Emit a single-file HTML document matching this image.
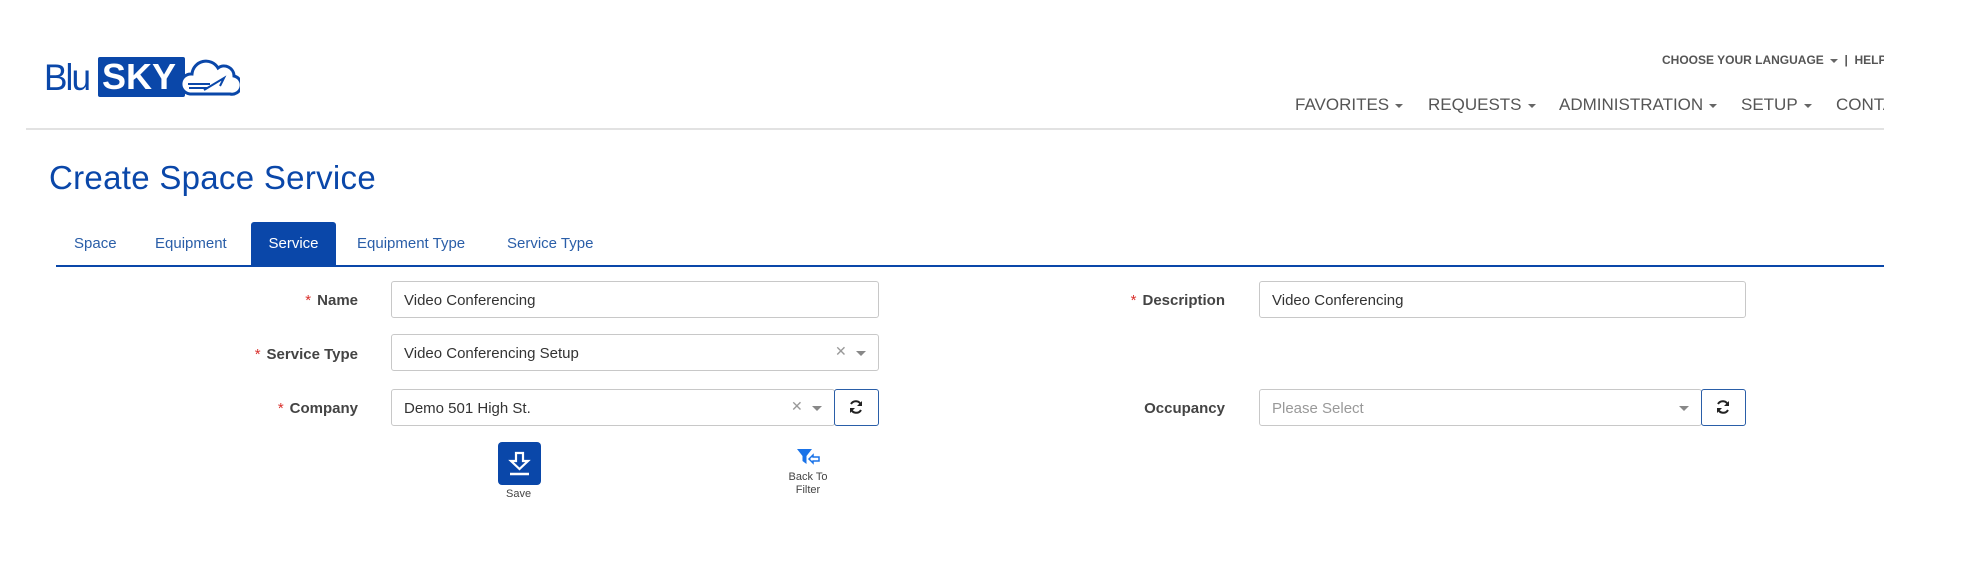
<!DOCTYPE html>
<html><head><meta charset="utf-8"><style>
*{box-sizing:border-box;margin:0;padding:0}
body{width:1964px;height:566px;background:#fff;font-family:"Liberation Sans",Arial,sans-serif;position:relative;overflow:hidden}
.a{position:absolute;white-space:nowrap}
.nav{font-size:17px;color:#555;top:95px}
.caret{display:inline-block;width:0;height:0;border-left:4px solid transparent;border-right:4px solid transparent;border-top:4px solid #666;vertical-align:middle;margin-left:6px}
.tab{font-size:15px;color:#2a5ea8;top:235px}
.lbl{font-size:15px;font-weight:bold;color:#444;text-align:right}
.lbl b{color:#d9302c;font-weight:normal;margin-right:6px}
.inp{border:1px solid #c8c8c8;border-radius:3px;height:37px;font-size:15px;color:#333;padding:10px 12px}
.btn{border:1px solid #2a5ea8;border-radius:3px;width:45px;height:37px;background:#fff}
.x{position:absolute;color:#999;font-size:14px}
.dd{position:absolute;width:0;height:0;border-left:5px solid transparent;border-right:5px solid transparent;border-top:5px solid #888}
</style></head><body>
<!-- logo -->
<div class="a" style="left:44px;top:58px;font-size:37px;color:#0a47a9;letter-spacing:-2px;line-height:40px;transform:scaleX(0.95);transform-origin:left">Blu</div>
<div class="a" style="left:98px;top:57px;width:87px;height:40px;background:#0a47a9;color:#fff;font-size:36px;font-weight:bold;line-height:40px;padding-left:4px;border-radius:2px">SKY</div>
<svg class="a" style="left:180px;top:54px" width="60" height="44" viewBox="0 0 60 44"><path d="M10 40 a10 10 0 0 1 2-20 a14 14 0 0 1 26-6 a10 10 0 0 1 16 8 a9 9 0 0 1-4 18 Z" fill="#fff" stroke="#0a47a9" stroke-width="3"/><path d="M8 30 h22 M9 34 h18 M24 36 l20-12 -4 8" stroke="#0a47a9" stroke-width="2" fill="none"/></svg>
<div class="a" style="left:26px;top:128px;width:1858px;height:2px;background:#e2e2e2"></div>
<div class="a" style="left:1662px;top:53px;font-size:12px;color:#555;font-weight:bold">CHOOSE YOUR LANGUAGE<span class="caret"></span>&nbsp; | &nbsp;HELP</div>
<div class="a" style="left:1884px;top:40px;width:80px;height:100px;background:#fff"></div>
<div class="a nav" style="left:1295px">FAVORITES<span class="caret"></span></div>
<div class="a nav" style="left:1428px">REQUESTS<span class="caret"></span></div>
<div class="a nav" style="left:1559px">ADMINISTRATION<span class="caret"></span></div>
<div class="a nav" style="left:1741px">SETUP<span class="caret"></span></div>
<div class="a nav" style="left:1836px;width:48px;overflow:hidden">CONTACT</div>
<div class="a" style="left:49px;top:159px;font-size:33px;letter-spacing:0.3px;color:#0a47a9">Create Space Service</div>
<div class="a tab" style="left:74px">Space</div>
<div class="a tab" style="left:155px">Equipment</div>
<div class="a" style="left:251px;top:222px;width:85px;height:45px;background:#0a47a9;border-radius:3px 3px 0 0;color:#fff;font-size:15px;text-align:center;line-height:44px">Service</div>
<div class="a tab" style="left:357px">Equipment Type</div>
<div class="a tab" style="left:507px">Service Type</div>
<div class="a" style="left:56px;top:265px;width:1828px;height:2px;background:#0a47a9"></div>
<!-- row1 -->
<div class="a lbl" style="right:1606px;top:292px"><b>*</b>Name</div>
<div class="a inp" style="left:391px;top:281px;width:488px">Video Conferencing</div>
<div class="a lbl" style="right:739px;top:292px"><b>*</b>Description</div>
<div class="a inp" style="left:1259px;top:281px;width:487px">Video Conferencing</div>
<!-- row2 -->
<div class="a lbl" style="right:1606px;top:346px"><b>*</b>Service Type</div>
<div class="a inp" style="left:391px;top:334px;width:488px">Video Conferencing Setup</div>
<div class="x" style="left:835px;top:343px">✕</div><div class="dd" style="left:856px;top:351px"></div>
<!-- row3 -->
<div class="a lbl" style="right:1606px;top:400px"><b>*</b>Company</div>
<div class="a inp" style="left:391px;top:389px;width:444px">Demo 501 High St.</div>
<div class="x" style="left:791px;top:398px">✕</div><div class="dd" style="left:812px;top:406px"></div>
<div class="a btn" style="left:834px;top:389px"></div>
<div class="a lbl" style="right:739px;top:400px">Occupancy</div>
<div class="a inp" style="left:1259px;top:389px;width:443px;color:#999">Please Select</div>
<div class="dd" style="left:1679px;top:406px"></div>
<div class="a btn" style="left:1701px;top:389px"></div>
<svg class="a" style="left:848px;top:399px" width="16" height="16" viewBox="0 0 16 16"><path d="M13 6 A5.5 5.5 0 0 0 3 5 M3 10 A5.5 5.5 0 0 0 13 11" stroke="#222" stroke-width="2" fill="none"/><path d="M14 2 v5 h-5z M2 14 v-5 h5z" fill="#222"/></svg>
<svg class="a" style="left:1715px;top:399px" width="16" height="16" viewBox="0 0 16 16"><path d="M13 6 A5.5 5.5 0 0 0 3 5 M3 10 A5.5 5.5 0 0 0 13 11" stroke="#222" stroke-width="2" fill="none"/><path d="M14 2 v5 h-5z M2 14 v-5 h5z" fill="#222"/></svg>
<!-- actions -->
<div class="a" style="left:498px;top:442px;width:43px;height:43px;background:#0a47a9;border-radius:4px"></div>
<svg class="a" style="left:507px;top:451px" width="25" height="25" viewBox="0 0 25 25"><path d="M9 2 h7 v8 h5 l-8.5 8 -8.5-8 h5z" fill="none" stroke="#fff" stroke-width="2.2"/><path d="M3 23 h19" stroke="#fff" stroke-width="2.5"/></svg>
<div class="a" style="left:506px;top:488px;font-size:11px;color:#444">Save</div>
<svg class="a" style="left:796px;top:448px" width="26" height="18" viewBox="0 0 26 18"><path d="M1 1 h15 l-5.5 7 v8 l-4-3 v-5z" fill="#1a73e8"/><path d="M13 11 l4-4 v2 h6 v4 h-6 v2z" fill="none" stroke="#1a73e8" stroke-width="1.5"/></svg>
<div class="a" style="left:786px;top:471px;font-size:11px;color:#444;text-align:center;line-height:13px;width:44px">Back To<br>Filter</div>
</body></html>
